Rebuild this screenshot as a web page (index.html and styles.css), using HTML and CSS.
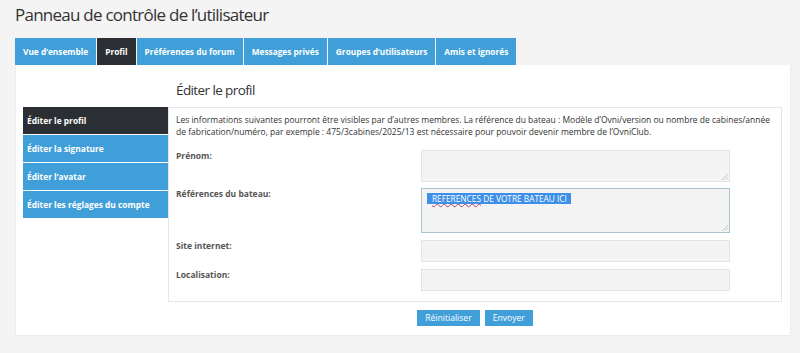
FILE: index.html
```html
<!DOCTYPE html>
<html lang="fr">
<head>
<meta charset="utf-8">
<title>Panneau de contrôle de l'utilisateur</title>
<link rel="stylesheet" href="styles.css">
</head>
<body>
<h1 class="page-title">Panneau de contrôle de l’utilisateur</h1>
<ul class="tabs">
  <li class="tab">Vue d’ensemble</li>
  <li class="tab active">Profil</li>
  <li class="tab">Préférences du forum</li>
  <li class="tab">Messages privés</li>
  <li class="tab">Groupes d’utilisateurs</li>
  <li class="tab">Amis et ignorés</li>
</ul>
<div class="panel">
  <h2 class="section-title">Éditer le profil</h2>
  <ul class="side-nav">
    <li class="nav-item active">Éditer le profil</li>
    <li class="nav-item">Éditer la signature</li>
    <li class="nav-item">Éditer l’avatar</li>
    <li class="nav-item">Éditer les réglages du compte</li>
  </ul>
  <div class="content">
    <p class="intro">Les informations suivantes pourront être visibles par d’autres membres. La référence du bateau : Modèle d’Ovni/version ou nombre de cabines/année de fabrication/numéro, par exemple : 475/3cabines/2025/13 est nécessaire pour pouvoir devenir membre de l’OvniClub.</p>
    <div class="row row-first">
      <label class="label">Prénom:</label>
      <div class="field area area-small"><span class="grip"></span></div>
    </div>
    <div class="row">
      <label class="label">Références du bateau:</label>
      <div class="field area area-big focused"><span class="sel"><span class="spell">REFERENCES</span> DE VOTRE BATEAU ICI</span><span class="grip"></span></div>
    </div>
    <div class="row row-input">
      <label class="label">Site internet:</label>
      <div class="field input"></div>
    </div>
    <div class="row row-input">
      <label class="label">Localisation:</label>
      <div class="field input"></div>
    </div>
  </div>
  <div class="buttons">
    <button class="btn">Réinitialiser</button>
    <button class="btn">Envoyer</button>
  </div>
</div>
</body>
</html>
```

FILE: styles.css
```css
html, body {
  margin: 0;
  padding: 0;
}
body {
  background: #f4f4f4;
  font-family: "Open Sans", "DejaVu Sans", sans-serif;
  color: #333;
  width: 800px;
  height: 353px;
  overflow: hidden;
}
.page-title {
  margin: 0;
  padding: 3px 0 0 15px;
  height: 35px;
  box-sizing: border-box;
  font-size: 17px;
  font-weight: 400;
  letter-spacing: -0.75px;
  color: #333;
  line-height: 24px;
}
.tabs {
  list-style: none;
  margin: 3px 0 0 15px;
  padding: 0;
  display: flex;
  height: 27px;
}
.tab {
  background: #409fd9;
  color: #fff;
  font-weight: 700;
  font-size: 8.3px;
  line-height: 27px;
  padding: 0 8px;
  margin-right: 1px;
}
.tab.active {
  background: #2b2f33;
}
.panel {
  background: #fff;
  margin: 0 9px 0 15px;
  border: 1px solid #ececec;
  border-top: none;
  padding: 0 8px 9px 7px;
  display: grid;
  grid-template-columns: 145px 1fr;
  grid-template-rows: 42px auto auto;
  height: 271px;
  box-sizing: border-box;
}
.section-title {
  grid-column: 2;
  grid-row: 1;
  margin: 0;
  padding: 16px 0 0 8px;
  font-size: 13.5px;
  font-weight: 400;
  letter-spacing: -0.6px;
  line-height: 18px;
  color: #333;
}
.side-nav {
  grid-column: 1;
  grid-row: 2;
  list-style: none;
  margin: 0;
  padding: 0;
  align-self: start;
}
.nav-item {
  background: #409fd9;
  color: #fff;
  font-weight: 700;
  font-size: 8.4px;
  height: 27px;
  line-height: 27px;
  padding-left: 4px;
  margin-bottom: 1px;
}
.nav-item.active {
  background: #2b2f33;
}
.content {
  grid-column: 2;
  grid-row: 2;
  border: 1px solid #e6e6e6;
  padding: 6px 3px 12px 7px;
  height: 195px;
  box-sizing: border-box;
}
.intro {
  margin: 0;
  font-size: 8.5px;
  line-height: 12px;
  color: #333;
}
.row {
  display: flex;
  align-items: flex-start;
  margin-top: 6px;
}
.row-first {
  margin-top: 12px;
}
.row-input {
  margin-top: 7px;
}
.label {
  width: 245px;
  flex: none;
  font-size: 8.5px;
  font-weight: 700;
  color: #555;
  line-height: 12px;
  padding-top: 0;
}
.field {
  width: 309px;
  box-sizing: border-box;
  background: #f4f4f4;
  border: 1px solid #e4e4e4;
  position: relative;
  font-size: 0;
  line-height: 0;
}
.area-small {
  height: 32px;
}
.area-big {
  height: 45px;
  padding: 4px 5px;
}
.focused {
  border-color: #a9c2cf;
}
.input {
  height: 22px;
}
.sel {
  display: block;
  width: fit-content;
  background: #3d8fe8;
  color: #fff;
  font-size: 8.3px;
  line-height: 11px;
  padding: 0 4px 0 5px;
}
.spell {
  text-decoration: underline wavy #b04060;
  text-decoration-thickness: 1px;
}
.grip {
  position: absolute;
  right: 1px;
  bottom: 1px;
  width: 6px;
  height: 6px;
  background: linear-gradient(135deg, transparent 45%, #c8c8c8 45%, #c8c8c8 55%, transparent 55%, transparent 70%, #c8c8c8 70%, #c8c8c8 80%, transparent 80%);
}
.buttons {
  grid-column: 2;
  grid-row: 3;
  display: flex;
  justify-content: center;
  gap: 5px;
  padding-top: 7px;
}
.btn {
  background: #409fd9;
  color: #fff;
  border: none;
  font-family: "Open Sans", "DejaVu Sans", sans-serif;
  font-size: 8.6px;
  height: 16px;
  line-height: 16px;
  padding: 0 8px;
  margin: 0;
}
```
